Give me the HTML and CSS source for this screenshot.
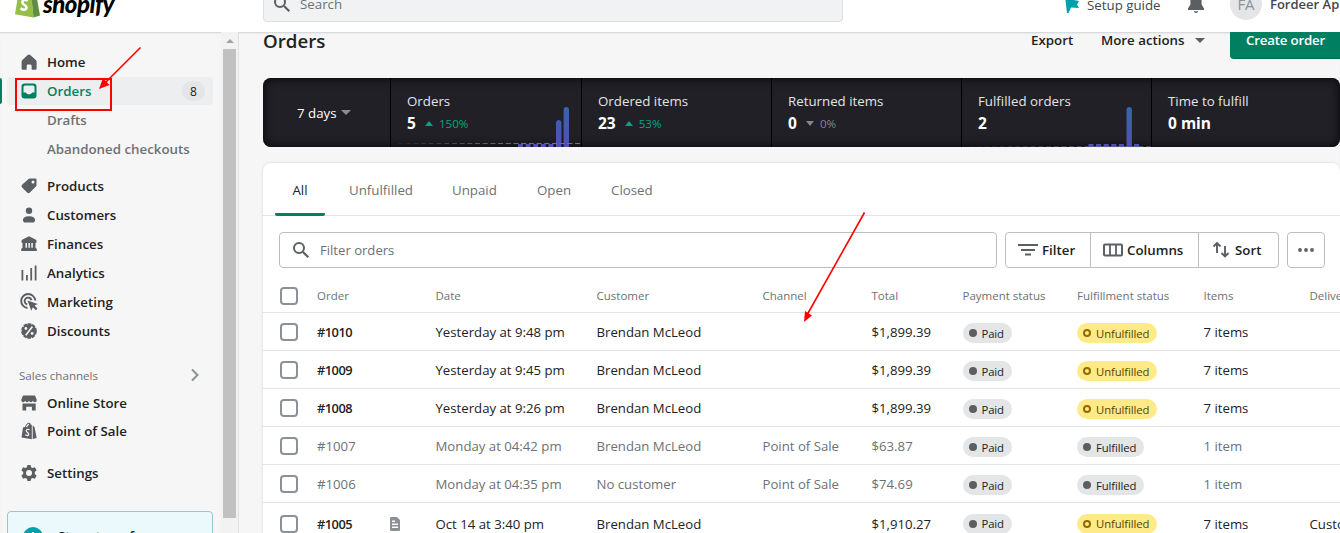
FILE: index.html
```
<!DOCTYPE html>
<html lang="en">
<head>
<meta charset="utf-8">
<title>Orders</title>
<link rel="stylesheet" href="styles.css">
</head>
<body>
<div class="app">
  <header class="topbar">
    <div class="topbar-inner">
      <div class="brand">
        <svg class="bag" width="26" height="29" viewBox="0 0 26 29"><path d="M3 7 16 4l2.500 24.500L0 25.200z" fill="#95bf47"/><path d="M18 4l3.500 3 3.500 19.500-6.500 2L16 4z" fill="#5e8e3e"/><path d="M12.800 11.500c-3-1.500-5.600-.2-5.400 2 .2 2.400 4.300 2.700 4.100 5.200-.2 2.300-3 2.700-6 .7" fill="none" stroke="#fff" stroke-width="2.600"/></svg>
        <span class="wordmark">shopify</span>
      </div>
      <div class="search"><svg width="20" height="20" viewBox="0 0 20 20"><circle cx="8" cy="8" r="5" fill="none" stroke="#5c5f62" stroke-width="2"/><path d="m12 12 5.300 5.300" stroke="#5c5f62" stroke-width="2.200"/></svg><span>Search</span></div>
      <div class="guide"><svg width="16" height="20" viewBox="0 0 16 20"><path d="M1 2l8 1 .5 3 5.500 1-2 3.500 2 3.500-8-.6L4.500 19H3z" fill="#00a0ac"/></svg><span>Setup guide</span></div>
      <svg class="bell" width="16" height="20" viewBox="0 0 16 20"><path d="M8 0a5.500 5.500 0 0 0-5.600 5.500v6L0 15.500V17h16v-1.500l-2.400-4v-6A5.500 5.500 0 0 0 8 0z" fill="#5c5f62"/><path d="M5.800 18.300h4.400c-.4 2.100-4 2.100-4.400 0z" fill="#5c5f62"/></svg>
      <span class="avatar">FA</span>
      <span class="account">Fordeer Apps</span>
    </div>
  </header>
  <div class="body">
    <aside class="sidebar">
      <nav class="nav">
        <a class="item"><svg class="ico" viewBox="0 0 20 20"><path d="M10 2.500c.5 0 1 .2 1.300.5l5.500 4.900c.5.500.8 1 .8 1.700v6.900c0 .8-.6 1.300-1.300 1.300h-2.800c-.5 0-.9-.4-.9-.9v-3c0-.8-.6-1.400-1.300-1.400H9c-.8 0-1.300.6-1.300 1.400v3c0 .5-.4.900-.9.900H4c-.8 0-1.400-.6-1.400-1.300V9.600c0-.6.300-1.200.8-1.700l5.300-4.900c.3-.3.800-.5 1.300-.5z"/></svg><span>Home</span></a>
        <a class="item active"><svg class="ico" viewBox="0 0 20 20"><path fill-rule="evenodd" d="M5.500 2.500h9a3 3 0 0 1 3 3v9a3 3 0 0 1-3 3h-9a3 3 0 0 1-3-3v-9a3 3 0 0 1 3-3zm.5 2A1.500 1.500 0 0 0 4.500 6v5.500h1.800c.6 0 .9.300 1.200.8.400.7.900 1 2.500 1s2.100-.3 2.500-1c.3-.5.600-.8 1.200-.8h1.800V6A1.500 1.500 0 0 0 14 4.500z"/></svg><span>Orders</span><b class="count">8</b></a>
        <a class="item sub"><span>Drafts</span></a>
        <a class="item sub"><span>Abandoned checkouts</span></a>
        <a class="item group-start"><svg class="ico" viewBox="0 0 20 20"><path fill-rule="evenodd" d="M11 2.500h5.500a1 1 0 0 1 1 1V9c0 .6-.2 1.100-.6 1.500l-6 6a2 2 0 0 1-2.800 0l-5-5a2 2 0 0 1 0-2.800l6.400-5.600c.4-.4.900-.6 1.500-.6zM14 7.600a1.500 1.500 0 1 0 0-3 1.500 1.500 0 0 0 0 3z"/></svg><span>Products</span></a>
        <a class="item"><svg class="ico" viewBox="0 0 20 20"><circle cx="10" cy="5.700" r="3.200"/><path d="M4 14.700c0-2.200 2.300-3.500 6-3.500s6 1.300 6 3.500c0 1.900-.8 2.800-2 2.800H6c-1.200 0-2-.9-2-2.800z"/></svg><span>Customers</span></a>
        <a class="item"><svg class="ico" viewBox="0 0 20 20"><path fill-rule="evenodd" d="m10 2.300 6.500 3.200c.6.300 1 .7 1 1.500v1c0 .5-.4 1-1 1H16.500v5c.7 0 1.300.7 1.300 1.700V17H2.200v-1.300c0-1 .6-1.700 1.300-1.700V9c-.6 0-1-.5-1-1V7c0-.8.4-1.200 1-1.500zM6.500 9v4.700H8V9zm2.900 0v4.700h1.500V9zm2.900 0v4.700h1.500V9z"/></svg><span>Finances</span></a>
        <a class="item"><svg class="ico" viewBox="0 0 20 20"><path d="M2.500 7H4.300v10.500H2.500zM7 12h1.800v5.500H7zm4.300-7h1.800v12.500h-1.800zm4.400-2.500h1.800v15h-1.800z"/></svg><span>Analytics</span></a>
        <a class="item"><svg class="ico" viewBox="0 0 20 20"><g fill="none" stroke="#5c5f62" stroke-width="1.900"><path d="M16.200 8.500A7 7 0 1 0 8.500 16"/><path d="M12.500 8.200A3.500 3.500 0 1 0 8.200 12.500"/></g><path d="M8.500 8.500 18.800 12l-3.200 1.600 2.900 3-1.600 1.600-3-2.900L12.300 18.800z"/></svg><span>Marketing</span></a>
        <a class="item"><svg class="ico" viewBox="0 0 20 20"><circle cx="10" cy="10" r="7" stroke="#5c5f62" stroke-width="1.700" stroke-dasharray="3.500 1"/><g fill="#f6f6f7"><path d="m12.600 5.200 1.500.9-6.600 8.700-1.500-.9z"/><circle cx="6.900" cy="7.500" r="1.400"/><circle cx="13.100" cy="12.500" r="1.400"/></g></svg><span>Discounts</span></a>
        <div class="section"><span>Sales channels</span><svg width="10" height="14" viewBox="0 0 10 14"><path d="m2 1.500 5.500 5.500L2 12.500" fill="none" stroke="#8c9196" stroke-width="2"/></svg></div>
        <a class="item tight"><svg class="ico" viewBox="0 0 20 20"><path d="M4 2.500h12l1.800 4.500c0 1.200-.8 2.200-1.900 2.200-1 0-1.700-.6-2-1.400-.3.800-1 1.400-2 1.400s-1.600-.6-1.900-1.400c-.3.800-1 1.400-1.900 1.400-1 0-1.700-.6-2-1.400-.3.800-1 1.400-2 1.400-1.100 0-1.900-1-1.900-2.200z"/><path d="M3.500 10.600h13.200v6.900h-3.800v-3.700H7.200v3.700H3.500z"/></svg><span>Online Store</span></a>
        <a class="item tight"><svg class="ico" viewBox="0 0 20 20"><path d="M4 6.500 6 6c.7-2.500 2.400-4.300 4-4.300 1 0 1.600.8 1.800 2l1 .1v14.500L2.500 16.500zM13.700 4.500 15.500 6l2.200 11-4 1z"/><path d="M10.500 8.700c-2-1-3.400 0-3.200 1.300.2 1.600 2.600 1.700 2.400 3.400-.2 1.400-2 1.400-3.500.4M7.500 6c.6-1.500 1.500-2.600 2.500-2.600" fill="none" stroke="#f6f6f7" stroke-width="1.300"/></svg><span>Point of Sale</span></a>
        <a class="item settings"><svg class="ico" viewBox="0 0 20 20"><path fill-rule="evenodd" d="M8.400 2h3.200l.5 2.300 1.500.8 2.300-.8 1.700 2.900-1.800 1.700v2.200l1.800 1.700-1.700 2.900-2.300-.8-1.500.8-.5 2.300H8.400l-.5-2.300-1.500-.8-2.300.8-1.700-2.900 1.800-1.700V8.900L2.400 7.200l1.700-2.900 2.300.8 1.500-.8zM10 13a3 3 0 1 0 0-6 3 3 0 0 0 0 6z"/></svg><span>Settings</span></a>
        <div class="notice"><svg width="20" height="20" viewBox="0 0 20 20"><circle cx="10" cy="10" r="10" fill="#00a0ac"/><path d="M10 5v10" stroke="#fff" stroke-width="2"/></svg><span>Store transfer</span></div>
      </nav>
      <div class="scrollbar"><i class="up"></i><i class="thumb"></i></div>
    </aside>
    <main class="main">
      <div class="heading">
        <h1>Orders</h1>
        <span class="link export">Export</span>
        <span class="link more">More actions<i class="caret"></i></span>
        <span class="create">Create order</span>
      </div>
      <section class="stats">
        <div class="period">7 days<i class="caret"></i></div>
        <div class="stat">
          <span class="label">Orders</span>
          <span class="value"><b>5</b><i class="tri up"></i><em>150%</em></span>
          <svg class="chart" width="190" height="69" viewBox="0 0 190 69">
            <defs>
              <linearGradient id="bar" gradientUnits="userSpaceOnUse" x1="0" y1="28" x2="0" y2="69"><stop offset="0" stop-color="#3766a8"/><stop offset="1" stop-color="#514eb8"/></linearGradient>
              <linearGradient id="dash" gradientUnits="userSpaceOnUse" x1="5" y1="0" x2="130" y2="0"><stop offset="0" stop-color="#6a7290" stop-opacity=".1"/><stop offset="1" stop-color="#6a7290"/></linearGradient>
            </defs>
            <path d="M127 69v-3h5v3zm7.600 0v-3h5v3zm7.600 0v-3h5v3zm7.600 0v-3h5v3zm7.600 0v-3h5v3zM165 69V45q0-3 2.700-3t2.700 3v24zM172.600 69V32q0-3 2.700-3t2.700 3v37z" fill="url(#bar)"/>
            <path d="M7 65.500h183v.01" fill="none" stroke="url(#dash)" stroke-dasharray="5 2.700"/>
          </svg>
        </div>
        <div class="stat"><span class="label">Ordered items</span><span class="value"><b>23</b><i class="tri up"></i><em>53%</em></span></div>
        <div class="stat"><span class="label">Returned items</span><span class="value"><b>0</b><i class="tri down"></i><em class="flat">0%</em></span></div>
        <div class="stat"><span class="label">Fulfilled orders</span><span class="value"><b>2</b></span>
          <svg class="chart" width="190" height="69" viewBox="0 0 190 69">
            <path d="M126.500 69v-3h5v3zm7.600 0v-3h5v3zm7.600 0v-3h5v3zm7.600 0v-3h5v3zm7.600 0v-3h5v3zm15.200 0v-3h5v3zM164.500 69V32q0-3 2.700-3t2.700 3v37z" fill="url(#bar)"/>
            <path d="M7 68.500h183v.01" fill="none" stroke="url(#dash)" stroke-dasharray="5 2.700" opacity=".6"/>
          </svg>
        </div>
        <div class="stat"><span class="label">Time to fulfill</span><span class="value"><b>0 min</b></span></div>
      </section>
      <section class="card">
        <div class="tabs"><span class="tab on t1">All</span><span class="tab t2">Unfulfilled</span><span class="tab t3">Unpaid</span><span class="tab t4">Open</span><span class="tab t5">Closed</span></div>
        <div class="tools">
          <div class="filter"><svg width="20" height="20" viewBox="0 0 20 20"><circle cx="8" cy="8" r="5" fill="none" stroke="#5c5f62" stroke-width="2"/><path d="m12 12 5.300 5.300" stroke="#5c5f62" stroke-width="2.200"/></svg><span>Filter orders</span></div>
          <div class="buttons">
            <span class="btn b1"><svg width="20" height="20" viewBox="0 0 20 20"><path d="M0 5h20M3 10h14M7 14.500h6" stroke="#5c5f62" stroke-width="1.900"/></svg><span>Filter</span></span>
            <span class="btn b2"><svg width="20" height="20" viewBox="0 0 20 20"><rect x="1" y="4.500" width="18" height="11" rx="1" fill="none" stroke="#5c5f62" stroke-width="2"/><path d="M7 4.500v11m6-11v11" stroke="#5c5f62" stroke-width="1.800"/></svg><span>Columns</span></span>
            <span class="btn b3"><svg width="20" height="20" viewBox="0 0 20 20"><path d="M6 13V3M2.500 6.500 6 3l3.500 3.500M14 6v10.500M10.500 13l3.500 3.500 3.500-3.500" fill="none" stroke="#5c5f62" stroke-width="1.900"/></svg><span>Sort</span></span>
          </div>
          <span class="dots"><svg width="16" height="4" viewBox="0 0 16 4"><circle cx="2" cy="2" r="1.900"/><circle cx="8" cy="2" r="1.900"/><circle cx="14" cy="2" r="1.900"/></svg></span>
        </div>
        <div class="row head"><i class="box"></i><span>Order</span><span>Date</span><span>Customer</span><span>Channel</span><span>Total</span><span>Payment status</span><span>Fulfillment status</span><span>Items</span><span>Delivery</span></div>
        <div class="row"><i class="box"></i><b>#1010</b><span>Yesterday at 9:48 pm</span><span>Brendan McLeod</span><span></span><span>$1,899.39</span><span class="pill paid">Paid</span><span class="pill open">Unfulfilled</span><span>7 items</span><span></span></div>
        <div class="row"><i class="box"></i><b>#1009</b><span>Yesterday at 9:45 pm</span><span>Brendan McLeod</span><span></span><span>$1,899.39</span><span class="pill paid">Paid</span><span class="pill open">Unfulfilled</span><span>7 items</span><span></span></div>
        <div class="row"><i class="box"></i><b>#1008</b><span>Yesterday at 9:26 pm</span><span>Brendan McLeod</span><span></span><span>$1,899.39</span><span class="pill paid">Paid</span><span class="pill open">Unfulfilled</span><span>7 items</span><span></span></div>
        <div class="row done"><i class="box"></i><span>#1007</span><span>Monday at 04:42 pm</span><span>Brendan McLeod</span><span>Point of Sale</span><span>$63.87</span><span class="pill paid">Paid</span><span class="pill full">Fulfilled</span><span>1 item</span><span></span></div>
        <div class="row done"><i class="box"></i><span>#1006</span><span>Monday at 04:35 pm</span><span>No customer</span><span>Point of Sale</span><span>$74.69</span><span class="pill paid">Paid</span><span class="pill full">Fulfilled</span><span>1 item</span><span></span></div>
        <div class="row tall"><i class="box"></i><div class="noted"><b>#1005</b><svg width="10" height="14" viewBox="0 0 10 14"><path fill-rule="evenodd" d="M1 0h6l3 3v10a1 1 0 0 1-1 1H1a1 1 0 0 1-1-1V1a1 1 0 0 1 1-1zm1 3.500V5h3V3.500zm0 3V8h6V6.500zm0 3V11h6V9.500z" fill="#8c9196"/></svg></div><span>Oct 14 at 3:40 pm</span><span>Brendan McLeod</span><span></span><span>$1,910.27</span><span class="pill paid">Paid</span><span class="pill open">Unfulfilled</span><span>7 items</span><span>Custom</span></div>
      </section>
    </main>
  </div>
  <svg class="marks" width="1340" height="533" viewBox="0 0 1340 533"><g fill="none" stroke="#fe0000" stroke-width="2"><path d="M16 79h95v31H16z"/><path d="M140.500 47.500 104 84M864.500 212.500 807 315" stroke-width="1.600"/></g><path d="m99 89 4-11 6.500 7zM804 322l1-11 7 4.500z" fill="#fe0000"/></svg>
</div>
</body>
</html>
```
FILE: styles.css
```
*, *::before { box-sizing: border-box; }
body { margin: 0; font-family: "Open Sans", "Noto Sans", sans-serif; font-size: 13.3px; color: #202223; }
.app { position: relative; width: 1340px; height: 533px; overflow: hidden; background: #f6f6f7; display: flex; flex-direction: column; white-space: nowrap; }
i, em { font-style: normal; }
svg { flex: none; display: block; }

.topbar { height: 32px; flex: none; overflow: hidden; background: #fff; }
.topbar-inner { height: 56px; margin-top: -24px; display: flex; align-items: center; padding-left: 15px; }
.topbar-inner > * { flex: none; }
.brand { width: 248px; display: flex; align-items: center; gap: 2px; }
.bag { margin-top: -1px; }
.wordmark { font: italic 900 24px/30px Lato, sans-serif; color: #000; letter-spacing: -.5px; margin-top: 0; }
.search { width: 580px; height: 36px; border: 1px solid #dcdee0; border-radius: 4px; background: #f1f2f4; display: flex; align-items: center; gap: 8px; padding-left: 8px; color: #6d7175; }
.guide { margin-left: 221px; width: 124px; display: flex; align-items: center; gap: 7px; color: #42474c; }
.guide span { padding-top: 2px; }
.bell { margin-top: -3px; }
.avatar { width: 32px; height: 32px; border-radius: 50%; background: #e4e5e7; color: #8c9196; margin: 0 8px 0 26px; display: flex; align-items: center; justify-content: center; font-size: 15px; }
.account { font-weight: 600; font-size: 13px; color: #42474c; }

.body { flex: 1; display: flex; min-height: 0; box-shadow: inset 0 1px 0 #d9dadb, inset 0 2px 1px #ececed; }
.sidebar { width: 239px; display: flex; border-right: 1px solid #dfe0e2; }
.nav { width: 221px; padding: 16px 8px 0 7px; font-weight: 560; overflow: hidden; }
.item { display: flex; align-items: center; height: 28px; margin-bottom: 1px; padding: 0 8px 0 12px; border-radius: 4px; }
.ico { width: 20px; height: 20px; fill: #5c5f62; margin-right: 8px; }
.item.active { position: relative; background: #edeeef; color: #008060; }
.item.active::before { content: ""; position: absolute; left: -7px; top: 1px; width: 2px; height: 26px; background: #008060; border-radius: 0 3px 3px 0; }
.active .ico { fill: #008060; }
.count { margin-left: auto; width: 23px; height: 20px; border-radius: 10px; background: #e4e5e7; color: #202223; font-weight: 500; font-size: 12px; display: flex; align-items: center; justify-content: center; }
.sub { padding-left: 40px; color: #6d7175; }
.group-start { margin-top: 9px; }
.section { display: flex; justify-content: space-between; align-items: center; height: 28px; margin-top: 16px; padding: 0 13px 0 12px; font-size: 11.600px; color: #6d7175; font-weight: 400; }
.tight { margin-bottom: 0; }
.settings { margin-top: 14px; margin-bottom: 24px; }
.notice { height: 60px; border: 1px solid #98c6cd; border-radius: 4px; background: #ebf9fc; padding: 15px 15px 0; display: flex; gap: 15px; }
.scrollbar { width: 17px; background: #f2f2f2; padding: 7px 2px 0; display: flex; flex-direction: column; align-items: center; }
.scrollbar .up { border: 4px solid transparent; border-top: 0; border-bottom: 4px solid #a3a3a3; margin-bottom: 6px; }
.scrollbar .thumb { width: 13px; height: 469px; background: #c1c1c1; }

.main { flex: 1; min-width: 0; padding-left: 24px; overflow: hidden; }
.heading { height: 46px; display: flex; align-items: flex-start; font-weight: 560; }
.heading > * { flex: none; }
h1 { margin: -4px 0 0; width: 768px; font-size: 18.700px; font-weight: 560; line-height: 26px; }
.link { line-height: 16px; }
.export { width: 70px; }
.more { width: 129px; display: flex; align-items: center; }
.caret { border: 5px solid transparent; border-top-color: #5c5f62; border-bottom: 0; margin-left: 10px; }
.create { width: 130px; height: 26px; line-height: 16px; padding-left: 16px; background: #008060; color: #fff; font-weight: 600; border-radius: 0 0 4px 4px; box-shadow: 0 1px 0 #006e52; letter-spacing: -.2px; }

.stats { height: 69px; background: #202026; box-shadow: inset 0 0 10px 1px #09090c; border-radius: 8px; display: grid; grid-template-columns: 127px 191px 190px 190px 190px 1fr; color: #fff; overflow: hidden; }
.period { display: flex; align-items: center; padding-left: 34px; }
.period .caret { border-top-color: #8c8c90; margin-left: 4px; }
.stat { position: relative; border-left: 1px solid #000; padding: 13px 0 0 16px; display: flex; flex-direction: column; }
.label { line-height: 20px; color: #e3e4e6; }
.value { display: flex; align-items: center; line-height: 25px; }
.value b { font-size: 15.500px; }
.value em { font-size: 11.600px; color: #00a884; }
.value em.flat { color: #85868b; }
.tri { border: 4.500px solid transparent; margin: 0 6px 0 9px; }
.tri.up { border-top: 0; border-bottom: 5px solid #00a884; }
.tri.down { border-bottom: 0; border-top: 5px solid #85868b; }
.chart { position: absolute; left: 0; top: 0; }

.card { margin-top: 16px; height: 400px; background: #fff; border-radius: 8px; box-shadow: 0 0 3px rgba(23,24,24,.15); }
.tabs { height: 53px; border-bottom: 1px solid #e1e3e5; display: flex; padding-left: 12px; color: #6d7175; }
.tab { height: 53px; line-height: 54px; padding-left: 16px; }
.tab.on { color: #202223; border-bottom: 3px solid #008060; border-radius: 0 0 2px 2px; padding: 0; text-align: center; }
.t1 { width: 50px; margin-right: 8px; }
.t2 { width: 103px; }
.t3 { width: 85px; }
.t4 { width: 74px; }

.tools { display: flex; padding: 16px 15px 0 16px; height: 63px; gap: 8px; }
.filter { width: 718px; height: 36px; border: 1px solid #babfc3; border-radius: 4px; display: flex; align-items: center; gap: 9px; padding-left: 11px; color: #6d7175; font-size: 13.100px; }
.buttons { width: 274px; height: 36px; border: 1px solid #babfc3; border-radius: 4px; display: flex; font-weight: 560; }
.btn { display: flex; align-items: center; gap: 4px; padding-left: 12px; }
.btn + .btn { border-left: 1px solid #babfc3; }
.b1 { width: 84px; }
.b2 { width: 108px; }
.dots { width: 38px; height: 36px; border: 1px solid #babfc3; border-radius: 4px; display: flex; align-items: center; justify-content: center; fill: #5c5f62; }

.row { display: grid; grid-template-columns: 37px 118.500px 161px 166px 109px 91px 114.500px 126.500px 106px 80px; align-items: center; height: 38px; padding-left: 17px; border-bottom: 1px solid #e1e3e5; width: 1077px; overflow: hidden; font-size: 13.200px; }
.row.head { height: 34px; font-size: 11.500px; font-weight: 500; color: #6d7175; }
.row b { font-weight: 600; font-size: 12.800px; letter-spacing: -.5px; }
.row.done { color: #6d7175; }
.row.tall { height: 42px; }
.box { width: 18px; height: 18px; border: 2px solid #8c9196; border-radius: 4px; }
.noted { display: flex; align-items: center; gap: 38px; }
.pill { justify-self: start; display: flex; align-items: center; gap: 5px; height: 20px; margin-top: 3px; padding: 0 8px 0 6px; border-radius: 10px; background: #e4e5e7; color: #202223; font-size: 11.300px; letter-spacing: -.1px; }
.pill::before { content: ""; width: 8px; height: 8px; border-radius: 50%; background: #5c5f62; }
.pill.open { background: #ffea8a; color: #4f4700; }
.pill.open::before { background: none; border: 2px solid #916a00; }
.tall .pill { margin-top: 0; }

.marks { position: absolute; left: 0; top: 0; pointer-events: none; }
```
